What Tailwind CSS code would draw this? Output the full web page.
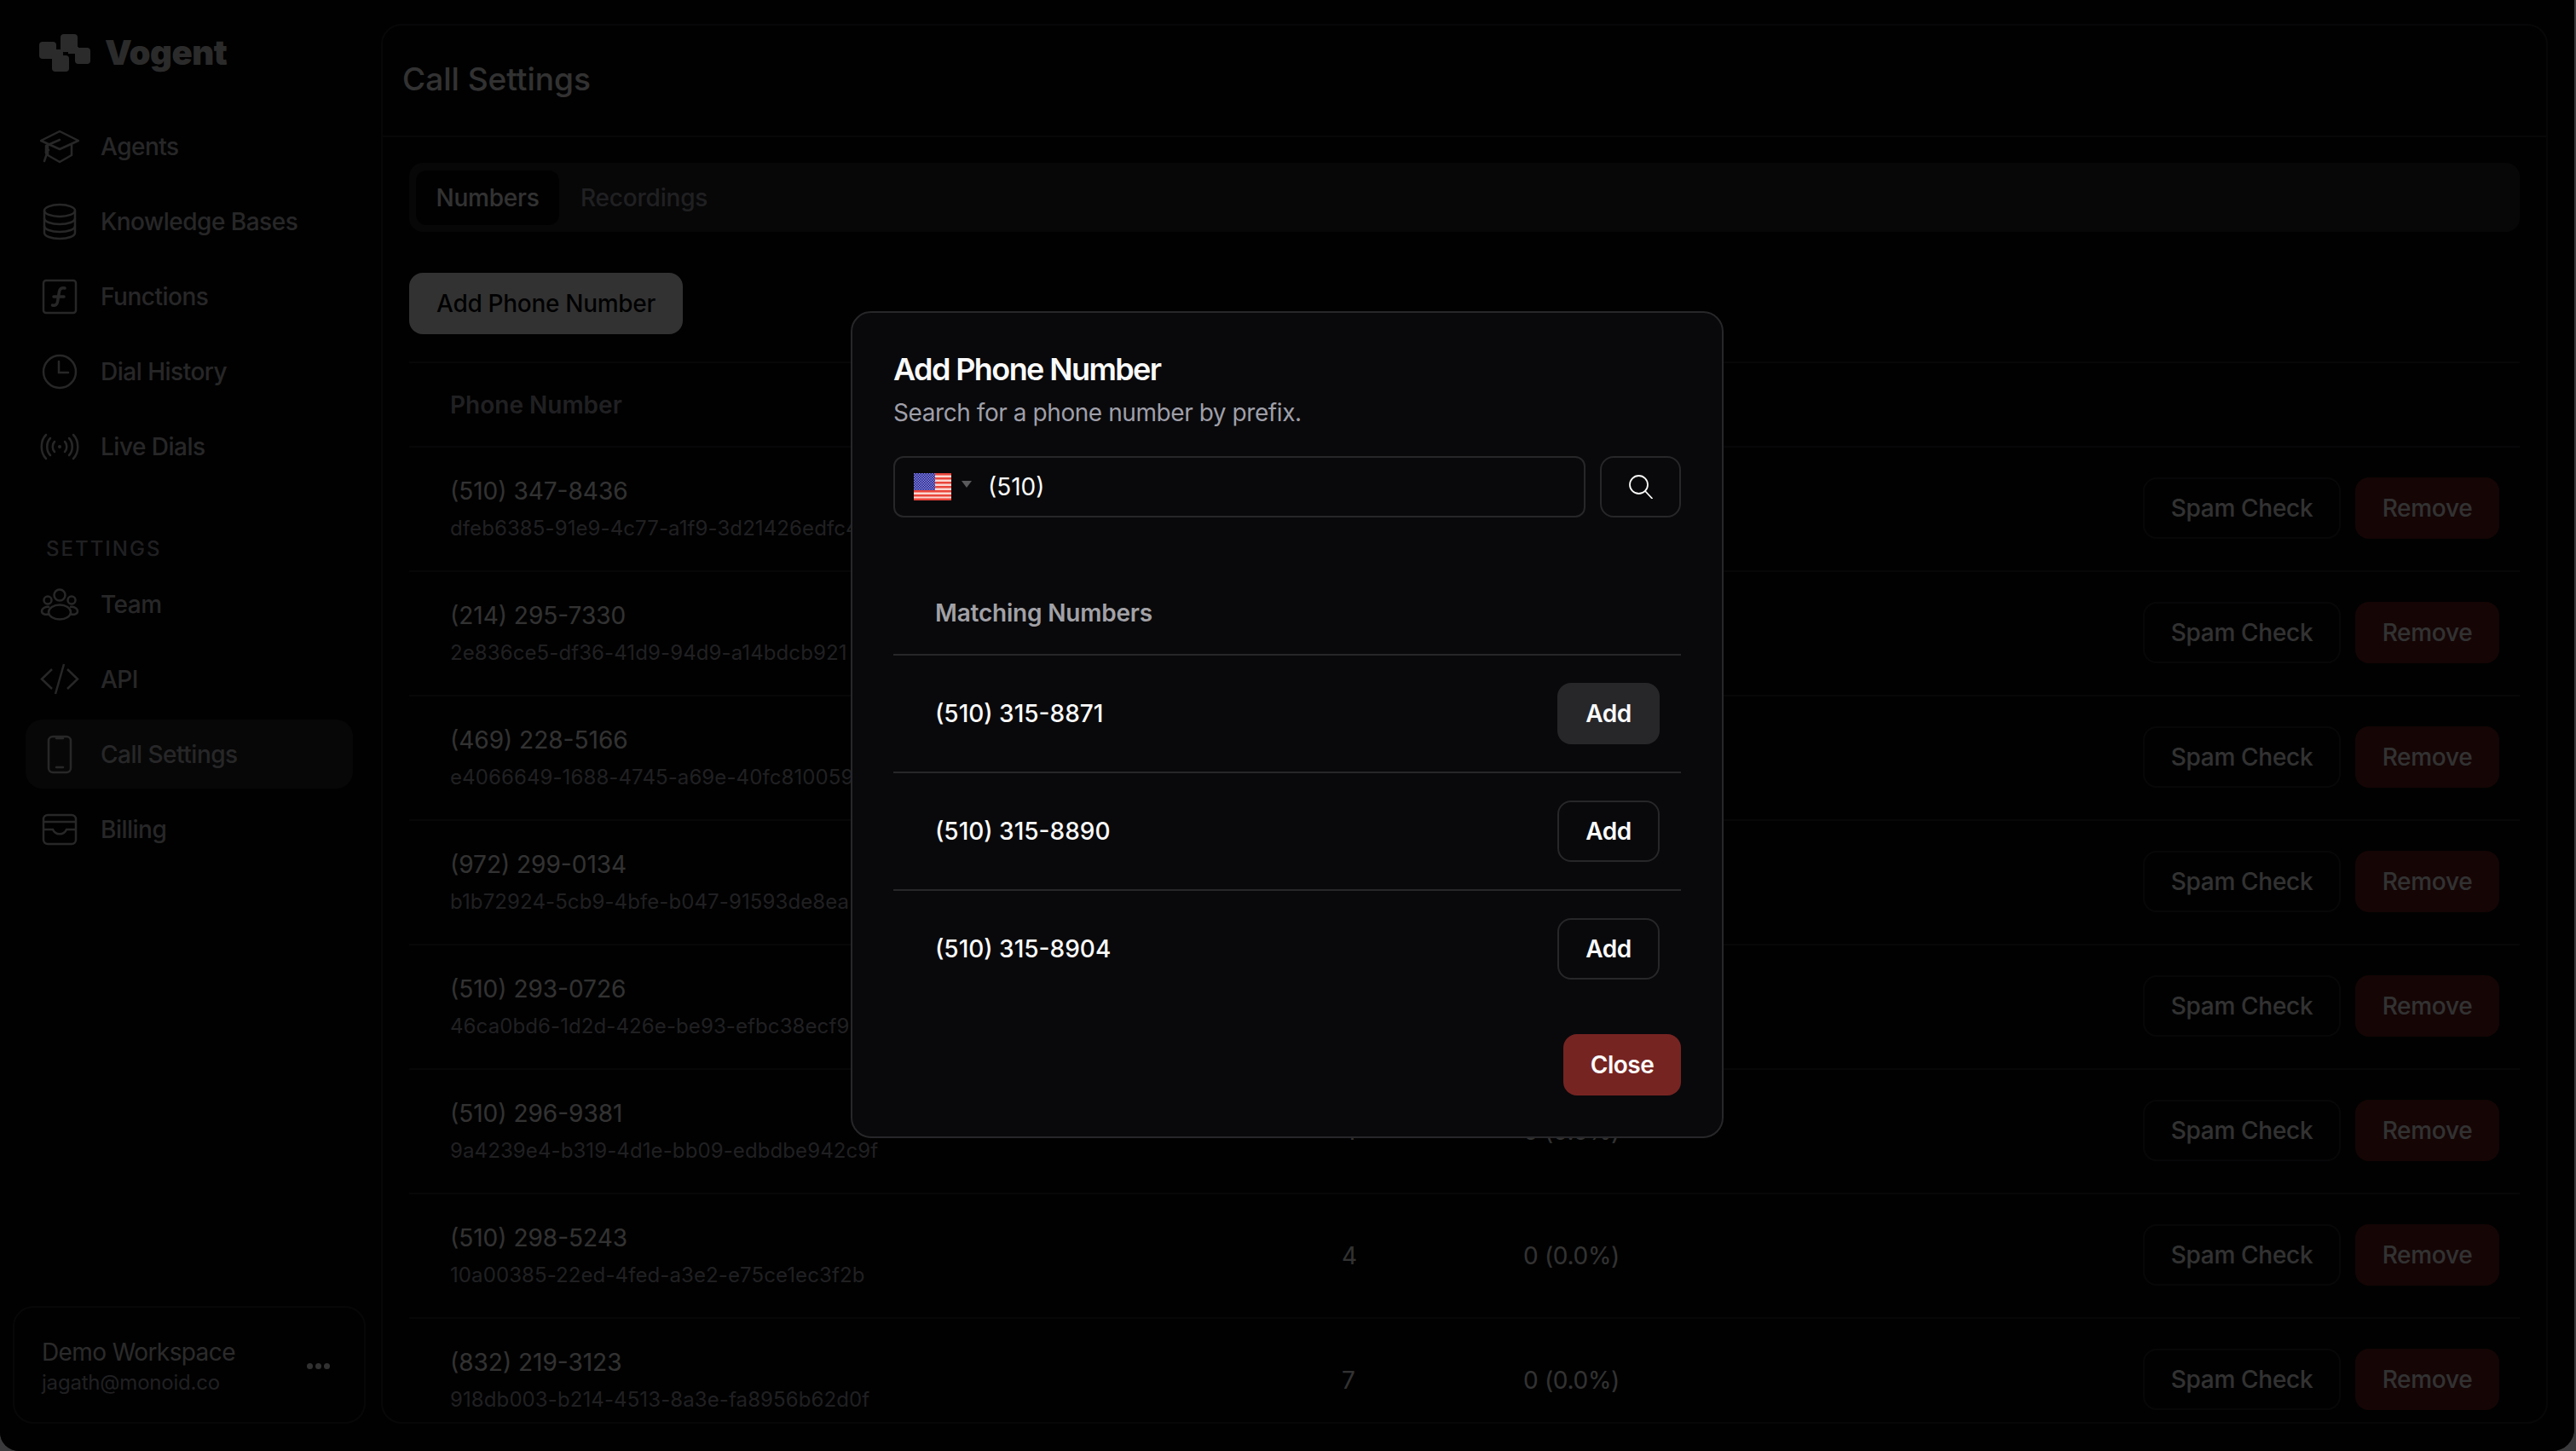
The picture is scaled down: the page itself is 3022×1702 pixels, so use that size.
<!DOCTYPE html>
<html lang="en">
<head>
<meta charset="utf-8">
<title>Call Settings</title>
<script src="https://cdn.jsdelivr.net/npm/@tailwindcss/browser@4"></script>
</head>
<body class="bg-[#3a3a3c] overflow-hidden">
<div class="w-[3022px] h-[1702px] bg-[#3a3a3c] [font-family:Inter,sans-serif] text-[28px]">
<div class="relative w-[3020px] h-[1702px] bg-[#050505] rounded-bl-[22px] rounded-br-[26px] overflow-hidden flex">

  <!-- Sidebar -->
  <aside class="w-[447px] h-full shrink-0 flex flex-col pl-[15px] pr-[18px] pb-[32px]">
    <div class="h-[131px] shrink-0 flex items-start pl-[31px] pt-[40px] gap-[17px]">
      <svg class="w-[60px] h-[44px]" viewBox="0 0 60 44" fill="#d8d8d8"><rect x="0" y="9" width="20" height="20" rx="4"/><rect x="25" y="0" width="20" height="21" rx="4"/><rect x="42" y="16" width="18" height="19" rx="4"/><rect x="15" y="25" width="20" height="19" rx="4"/><rect x="16" y="18" width="12" height="10"/><rect x="34" y="15" width="12" height="8"/></svg>
      <span class="text-[40px] leading-[44px] font-black tracking-[-0.5px] text-[#d8d8d8]">Vogent</span>
    </div>
    <nav class="mx-[15px] flex flex-col gap-[7px] text-[#c0c0c5] font-medium tracking-[-0.5px]">
      <a class="h-[81px] rounded-[20px] pl-[17px] flex items-center gap-[25px]">
        <svg class="w-[46px] h-[40px] shrink-0" viewBox="0 0 46 40" fill="none" stroke="currentColor" stroke-width="2.5" stroke-linejoin="round" stroke-linecap="round"><path d="M1 13 23 2l22 11-22 10Z"/><path d="M9 18v12l14 8 14-8V18"/><path d="M23 12 7 19v8"/><path d="M10 24c-3 0-4 3-2 5M8 28l-3 9"/></svg>
        <span>Agents</span>
      </a>
      <a class="h-[81px] rounded-[20px] pl-[17px] flex items-center gap-[25px]">
        <svg class="w-[46px] h-[44px] shrink-0" viewBox="0 0 46 44" fill="none" stroke="currentColor" stroke-width="2.5"><ellipse cx="23" cy="9" rx="18" ry="7"/><path d="M5 9v26c0 4 8 7 18 7s18-3 18-7V9"/><path d="M5 18c0 4 8 7 18 7s18-3 18-7M5 27c0 4 8 7 18 7s18-3 18-7"/></svg>
        <span>Knowledge Bases</span>
      </a>
      <a class="h-[81px] rounded-[20px] pl-[17px] flex items-center gap-[25px]">
        <svg class="w-[46px] h-[42px] shrink-0" viewBox="0 0 46 42" fill="none" stroke="currentColor" stroke-width="2.5"><rect x="4" y="2" width="38" height="38" rx="3"/><path stroke-width="3.5" stroke-linecap="round" d="M29 11c-4-1-6 1-6.500 4l-2 12c-.5 3-2.500 5-6 4M16 21h12"/></svg>
        <span>Functions</span>
      </a>
      <a class="h-[81px] rounded-[20px] pl-[17px] flex items-center gap-[25px]">
        <svg class="w-[46px] h-[42px] shrink-0" viewBox="0 0 46 42" fill="none" stroke="currentColor" stroke-width="2.5" stroke-linecap="round"><circle cx="23" cy="21" r="19"/><path d="M22 9v13h11"/></svg>
        <span>Dial History</span>
      </a>
      <a class="h-[81px] rounded-[20px] pl-[17px] flex items-center gap-[25px]">
        <svg class="w-[46px] h-[32px] shrink-0" viewBox="0 0 46 32" fill="none" stroke="currentColor" stroke-width="2.5" stroke-linecap="round"><circle cx="23" cy="16" r="2" fill="currentColor" stroke="none"/><path d="M17 10c-3 3-3 9 0 12M29 10c3 3 3 9 0 12M12 6c-5 5-5 15 0 20M34 6c5 5 5 15 0 20M7 2C0 9 0 23 7 30M39 2c7 7 7 21 0 28"/></svg>
        <span>Live Dials</span>
      </a>
    </nav>
    <div class="mt-[60px] mb-[4px] pl-[39px] h-[40px] leading-[40px] text-[24px] font-medium tracking-[2px] text-zinc-400">SETTINGS</div>
    <nav class="mx-[15px] flex flex-col gap-[7px] text-[#c0c0c5] font-medium tracking-[-0.5px]">
      <a class="h-[81px] rounded-[20px] pl-[17px] flex items-center gap-[25px]">
        <svg class="w-[46px] h-[38px] shrink-0" viewBox="0 0 46 38" fill="none" stroke="currentColor" stroke-width="2.5"><circle cx="23" cy="8" r="6.500"/><circle cx="9" cy="14" r="4.500"/><circle cx="37" cy="14" r="4.500"/><ellipse cx="23" cy="28" rx="13" ry="8.500"/><path d="M11 22c-5-1-9 2-9 5s4 5 9 3M35 22c5-1 9 2 9 5s-4 5-9 3"/></svg>
        <span>Team</span>
      </a>
      <a class="h-[81px] rounded-[20px] pl-[17px] flex items-center gap-[25px]">
        <svg class="w-[46px] h-[37px] shrink-0" viewBox="0 0 46 37" fill="none" stroke="currentColor" stroke-width="2.5"><path d="M14 7 2 18.500 14 30M32 7l12 11.500L32 30M28 1l-10 35"/></svg>
        <span>API</span>
      </a>
      <a class="h-[81px] rounded-[20px] pl-[17px] flex items-center gap-[25px] bg-zinc-800/90">
        <svg class="w-[46px] h-[46px] shrink-0" viewBox="0 0 46 46" fill="none" stroke="currentColor" stroke-width="2.5" stroke-linecap="round"><rect x="10" y="2" width="26" height="42" rx="5"/><path d="M19 4h8M19 38h8"/></svg>
        <span>Call Settings</span>
      </a>
      <a class="h-[81px] rounded-[20px] pl-[17px] flex items-center gap-[25px]">
        <svg class="w-[46px] h-[38px] shrink-0" viewBox="0 0 46 38" fill="none" stroke="currentColor" stroke-width="2.500"><rect x="4" y="2" width="38" height="34" rx="5"/><path d="M4 10h38M4 19h11c3 7 13 7 16 0h11"/></svg>
        <span>Billing</span>
      </a>
    </nav>
    <div class="mt-auto h-[138px] rounded-[24px] border-2 border-zinc-800 flex items-center justify-between pl-[32px] pr-[40px]">
      <div class="flex flex-col pt-[6px]">
        <span class="text-[28px] leading-[36px] tracking-[-0.6px] text-zinc-300">Demo Workspace</span>
        <span class="text-[24px] leading-[36px] tracking-[-0.2px] text-zinc-400">jagath@monoid.co</span>
      </div>
      <div class="flex gap-[3px] mt-[2px]"><i class="w-[7px] h-[7px] rounded-full bg-zinc-100"></i><i class="w-[7px] h-[7px] rounded-full bg-zinc-100"></i><i class="w-[7px] h-[7px] rounded-full bg-zinc-100"></i></div>
    </div>
  </aside>

  <!-- Main panel -->
  <main class="w-[2542px] h-[1642px] mt-[28px] shrink-0 rounded-[24px] border-2 border-zinc-800 overflow-hidden flex flex-col text-zinc-50">
    <header class="h-[131px] shrink-0 border-b-2 border-zinc-800 pl-[23px] pb-[3px] flex items-center">
      <h1 class="text-[37px] leading-[48px] font-medium">Call Settings</h1>
    </header>
    <div class="pl-[31px] pr-[31px] pt-[30px] flex flex-col">
      <div class="h-[81px] bg-zinc-800/90 rounded-[16px] p-[8px] flex items-center gap-[0px] font-medium tracking-[-0.2px]">
        <div class="h-[64px] w-[168px] rounded-[12px] bg-[#09090b] flex items-center justify-center">Numbers</div>
        <div class="h-[64px] px-[25px] flex items-center text-zinc-400">Recordings</div>
      </div>
      <div class="mt-[48px]">
        <button class="h-[72px] w-[321px] rounded-[16px] bg-zinc-50 text-[#09090b] font-medium tracking-[-0.3px]">Add Phone Number</button>
      </div>
      <div class="mt-[32px]">
        <div class="h-[99px] border-t-2 border-zinc-800 pl-[48px] flex items-center text-zinc-400 font-semibold">Phone Number</div>

        <div class="h-[146px] border-t-2 border-zinc-800 pl-[48px] pr-[24px] grid grid-cols-[1046px_213px_1fr_auto] items-center">
          <div class="flex flex-col mt-[2px]"><span class="leading-[40px]">(510) 347-8436</span><span class="text-[24px] leading-[40px] mt-[4px] tracking-[0.1px] text-zinc-400">dfeb6385-91e9-4c77-a1f9-3d21426edfc4</span></div>
          <span>3</span><span class="tracking-[-0.3px]">0 (0.0%)</span>
          <div class="flex gap-[17px] font-medium tracking-[-0.3px] -mt-[2px]"><button class="w-[232px] h-[72px] rounded-[16px] border-2 border-zinc-800">Spam Check</button><button class="w-[169px] h-[72px] rounded-[16px] bg-[#6b1c1a]">Remove</button></div>
        </div>
        <div class="h-[146px] border-t-2 border-zinc-800 pl-[48px] pr-[24px] grid grid-cols-[1046px_213px_1fr_auto] items-center">
          <div class="flex flex-col mt-[2px]"><span class="leading-[40px]">(214) 295-7330</span><span class="text-[24px] leading-[40px] mt-[4px] tracking-[0.1px] text-zinc-400">2e836ce5-df36-41d9-94d9-a14bdcb921</span></div>
          <span>3</span><span class="tracking-[-0.3px]">0 (0.0%)</span>
          <div class="flex gap-[17px] font-medium tracking-[-0.3px] -mt-[2px]"><button class="w-[232px] h-[72px] rounded-[16px] border-2 border-zinc-800">Spam Check</button><button class="w-[169px] h-[72px] rounded-[16px] bg-[#6b1c1a]">Remove</button></div>
        </div>
        <div class="h-[146px] border-t-2 border-zinc-800 pl-[48px] pr-[24px] grid grid-cols-[1046px_213px_1fr_auto] items-center">
          <div class="flex flex-col mt-[2px]"><span class="leading-[40px]">(469) 228-5166</span><span class="text-[24px] leading-[40px] mt-[4px] tracking-[0.1px] text-zinc-400">e4066649-1688-4745-a69e-40fc810059</span></div>
          <span>3</span><span class="tracking-[-0.3px]">0 (0.0%)</span>
          <div class="flex gap-[17px] font-medium tracking-[-0.3px] -mt-[2px]"><button class="w-[232px] h-[72px] rounded-[16px] border-2 border-zinc-800">Spam Check</button><button class="w-[169px] h-[72px] rounded-[16px] bg-[#6b1c1a]">Remove</button></div>
        </div>
        <div class="h-[146px] border-t-2 border-zinc-800 pl-[48px] pr-[24px] grid grid-cols-[1046px_213px_1fr_auto] items-center">
          <div class="flex flex-col mt-[2px]"><span class="leading-[40px]">(972) 299-0134</span><span class="text-[24px] leading-[40px] mt-[4px] tracking-[0.1px] text-zinc-400">b1b72924-5cb9-4bfe-b047-91593de8ea</span></div>
          <span>3</span><span class="tracking-[-0.3px]">0 (0.0%)</span>
          <div class="flex gap-[17px] font-medium tracking-[-0.3px] -mt-[2px]"><button class="w-[232px] h-[72px] rounded-[16px] border-2 border-zinc-800">Spam Check</button><button class="w-[169px] h-[72px] rounded-[16px] bg-[#6b1c1a]">Remove</button></div>
        </div>
        <div class="h-[146px] border-t-2 border-zinc-800 pl-[48px] pr-[24px] grid grid-cols-[1046px_213px_1fr_auto] items-center">
          <div class="flex flex-col mt-[2px]"><span class="leading-[40px]">(510) 293-0726</span><span class="text-[24px] leading-[40px] mt-[4px] tracking-[0.1px] text-zinc-400">46ca0bd6-1d2d-426e-be93-efbc38ecf9</span></div>
          <span>3</span><span class="tracking-[-0.3px]">0 (0.0%)</span>
          <div class="flex gap-[17px] font-medium tracking-[-0.3px] -mt-[2px]"><button class="w-[232px] h-[72px] rounded-[16px] border-2 border-zinc-800">Spam Check</button><button class="w-[169px] h-[72px] rounded-[16px] bg-[#6b1c1a]">Remove</button></div>
        </div>
        <div class="h-[146px] border-t-2 border-zinc-800 pl-[48px] pr-[24px] grid grid-cols-[1046px_213px_1fr_auto] items-center">
          <div class="flex flex-col mt-[2px]"><span class="leading-[40px]">(510) 296-9381</span><span class="text-[24px] leading-[40px] mt-[4px] tracking-[0.1px] text-zinc-400">9a4239e4-b319-4d1e-bb09-edbdbe942c9f</span></div>
          <span>4</span><span class="tracking-[-0.3px]">0 (0.0%)</span>
          <div class="flex gap-[17px] font-medium tracking-[-0.3px] -mt-[2px]"><button class="w-[232px] h-[72px] rounded-[16px] border-2 border-zinc-800">Spam Check</button><button class="w-[169px] h-[72px] rounded-[16px] bg-[#6b1c1a]">Remove</button></div>
        </div>
        <div class="h-[146px] border-t-2 border-zinc-800 pl-[48px] pr-[24px] grid grid-cols-[1046px_213px_1fr_auto] items-center">
          <div class="flex flex-col mt-[2px]"><span class="leading-[40px]">(510) 298-5243</span><span class="text-[24px] leading-[40px] mt-[4px] tracking-[0.1px] text-zinc-400">10a00385-22ed-4fed-a3e2-e75ce1ec3f2b</span></div>
          <span>4</span><span class="tracking-[-0.3px]">0 (0.0%)</span>
          <div class="flex gap-[17px] font-medium tracking-[-0.3px] -mt-[2px]"><button class="w-[232px] h-[72px] rounded-[16px] border-2 border-zinc-800">Spam Check</button><button class="w-[169px] h-[72px] rounded-[16px] bg-[#6b1c1a]">Remove</button></div>
        </div>
        <div class="h-[146px] border-t-2 border-zinc-800 pl-[48px] pr-[24px] grid grid-cols-[1046px_213px_1fr_auto] items-center">
          <div class="flex flex-col mt-[2px]"><span class="leading-[40px]">(832) 219-3123</span><span class="text-[24px] leading-[40px] mt-[4px] tracking-[0.1px] text-zinc-400">918db003-b214-4513-8a3e-fa8956b62d0f</span></div>
          <span>7</span><span class="tracking-[-0.3px]">0 (0.0%)</span>
          <div class="flex gap-[17px] font-medium tracking-[-0.3px] -mt-[2px]"><button class="w-[232px] h-[72px] rounded-[16px] border-2 border-zinc-800">Spam Check</button><button class="w-[169px] h-[72px] rounded-[16px] bg-[#6b1c1a]">Remove</button></div>
        </div>
      </div>
    </div>
  </main>

  <!-- Backdrop and dialog -->
  <div class="absolute inset-0 bg-black/80 flex items-center justify-center">
    <div class="w-[1024px] rounded-[24px] border-2 border-zinc-800 bg-[#09090b] px-[48px] pt-[46px] pb-[48px] text-zinc-50 -mt-[2px]">
      <h2 class="text-[36px] leading-[40px] font-semibold tracking-[-1.6px]">Add Phone Number</h2>
      <p class="mt-[11px] leading-[40px] text-zinc-400 tracking-[-0.43px]">Search for a phone number by prefix.</p>
      <div class="mt-[31px] flex gap-[17px]">
        <div class="w-[812px] h-[72px] rounded-[12px] border-2 border-zinc-800 flex items-center pl-[22px]">
          <svg class="w-[44px] h-[32px] shrink-0" viewBox="0 0 44 32">
            <defs><pattern id="stars" width="3" height="3" patternUnits="userSpaceOnUse"><rect width="3" height="3" fill="#20208f"/><rect width="1.500" height="1.500" fill="#8a8ad8"/><rect x="1.500" y="1.500" width="1.500" height="1.500" fill="#8a8ad8"/></pattern></defs>
            <rect width="44" height="32" fill="#fbd6d0"/>
            <g fill="#e9443a"><rect y="0" width="44" height="2.500"/><rect y="5" width="44" height="2.500"/><rect y="10" width="44" height="2.500"/><rect y="15" width="44" height="2.500"/><rect y="20" width="44" height="2.500"/><rect y="25" width="44" height="2.500"/><rect y="29.500" width="44" height="2.500"/></g>
            <rect width="25" height="20" fill="url(#stars)"/>
          </svg>
          <svg class="w-[12px] h-[8px] ml-[12px] -mt-[6px] shrink-0" viewBox="0 0 12 8"><path d="M0 0h12L6 8Z" fill="#5a5a5c"/></svg>
          <span class="ml-[19px]">(510)</span>
        </div>
        <button class="w-[95px] h-[72px] rounded-[16px] border-2 border-zinc-800 flex items-center justify-center">
          <svg class="w-[28px] h-[28px]" viewBox="0 0 28 28" fill="none" stroke="currentColor" stroke-width="1.800" stroke-linecap="round"><circle cx="11.500" cy="11.500" r="10.500"/><path d="m19 19 8 8.500"/></svg>
        </button>
      </div>
      <div class="mt-[64px]">
        <div class="h-[98px] pl-[49px] flex items-center text-[#a1a1a6] font-semibold tracking-[-0.2px] border-b-2 border-zinc-800">Matching Numbers</div>
        <div class="h-[138px] border-b-2 border-zinc-800 pl-[49px] pr-[25px] flex items-center justify-between font-medium">
          <span>(510) 315-8871</span>
          <button class="w-[120px] h-[72px] rounded-[16px] bg-zinc-800 font-semibold tracking-[-0.5px]">Add</button>
        </div>
        <div class="h-[138px] border-b-2 border-zinc-800 pl-[49px] pr-[25px] flex items-center justify-between font-medium">
          <span>(510) 315-8890</span>
          <button class="w-[120px] h-[72px] rounded-[16px] border-2 border-zinc-800 font-semibold tracking-[-0.5px]">Add</button>
        </div>
        <div class="h-[136px] pl-[49px] pr-[25px] flex items-center justify-between font-medium">
          <span>(510) 315-8904</span>
          <button class="w-[120px] h-[72px] rounded-[16px] border-2 border-zinc-800 font-semibold tracking-[-0.5px]">Add</button>
        </div>
      </div>
      <div class="mt-[32px] flex justify-end">
        <button class="w-[138px] h-[72px] rounded-[16px] bg-[#762422] font-semibold tracking-[-0.5px]">Close</button>
      </div>
    </div>
  </div>
</div>
</div>
</body>
</html>
